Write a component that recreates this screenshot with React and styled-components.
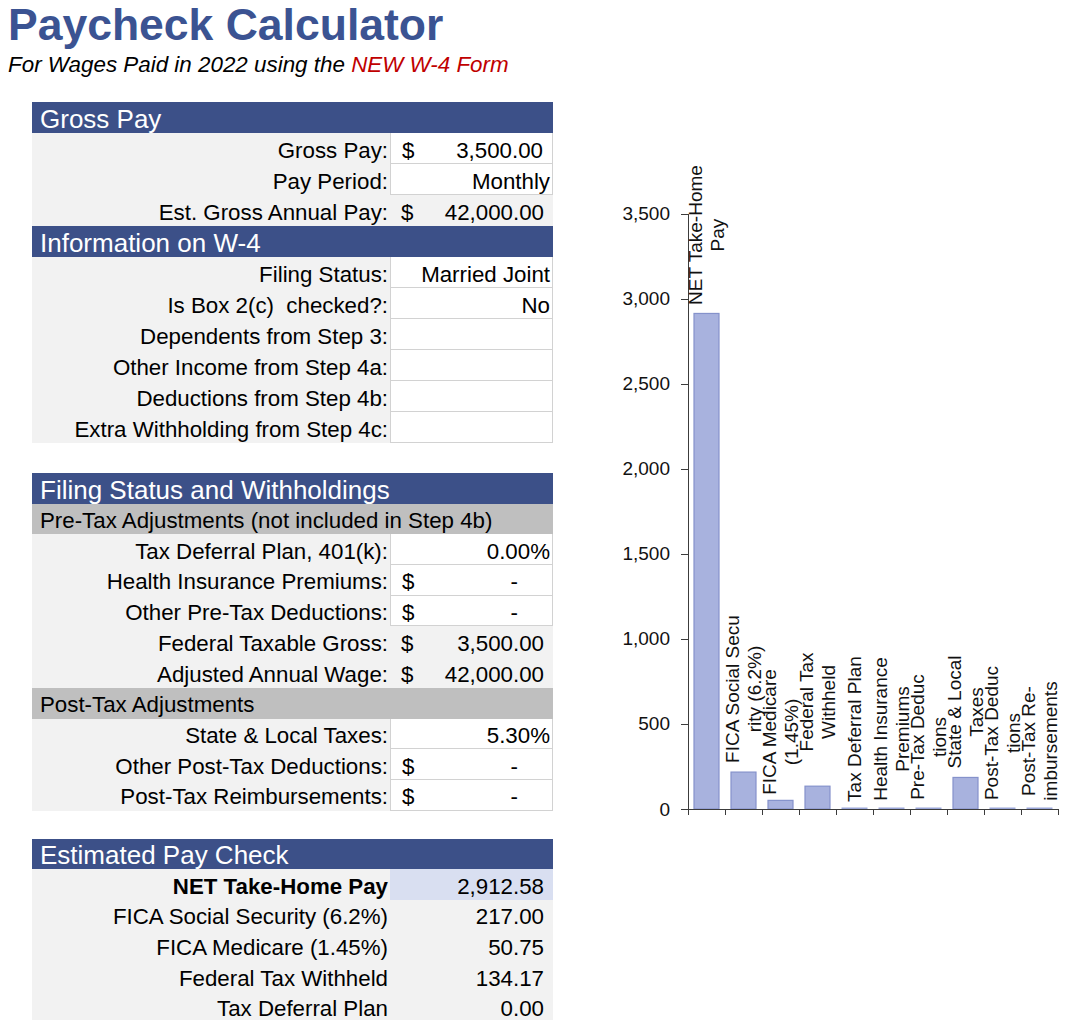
import React from "react";
import styled, { createGlobalStyle } from "styled-components";

const GlobalStyle = createGlobalStyle`
  html, body { margin: 0; padding: 0; background: #ffffff; }
  body { font-family: "Liberation Sans", Arial, sans-serif; color: #000; }
`;

const Page = styled.div`
  width: 1067px;
  height: 1020px;
  overflow: hidden;
  padding-left: 8px;
  box-sizing: border-box;
`;

const Title = styled.h1`
  margin: 0;
  padding-top: 3px;
  font-size: 44.5px;
  line-height: 44.5px;
  font-weight: 700;
  color: #3b5392;
  white-space: nowrap;
`;

const Subtitle = styled.p`
  margin: 4px 0 0;
  font-size: 22.4px;
  line-height: 26px;
  font-style: italic;
  white-space: nowrap;
`;

const Accent = styled.span`
  color: #c00000;
`;

const Content = styled.div`
  display: flex;
  align-items: flex-start;
  margin-top: 24.5px;
`;

const Sheet = styled.div`
  margin-left: 24px;
  width: 521px;
  display: flex;
  flex-direction: column;
`;

const Section = styled.section`
  --row: ${(p) => p.$row}px;
  display: flex;
  flex-direction: column;
`;

const Spacer = styled.div`
  height: ${(p) => p.$h}px;
`;

const BandHeader = styled.div`
  height: var(--row);
  box-sizing: border-box;
  background: #3c5088;
  color: #ffffff;
  font-size: 26px;
  line-height: 1;
  padding: 0 0 1px 8px;
  display: flex;
  align-items: flex-end;
  white-space: nowrap;
`;

const SubHeader = styled.div`
  height: var(--row);
  box-sizing: border-box;
  background: #bfbfbf;
  font-size: 22.3px;
  line-height: 1;
  padding: 0 0 2px 8px;
  display: flex;
  align-items: flex-end;
  white-space: nowrap;
`;

const Row = styled.div`
  display: grid;
  grid-template-columns: 358px 163px;
  height: var(--row);
`;

const Label = styled.div`
  background: #f2f2f2;
  font-size: 22.3px;
  line-height: 1;
  font-weight: ${(p) => (p.$bold ? 700 : 400)};
  display: flex;
  justify-content: flex-end;
  align-items: flex-end;
  padding: 0 2px 2px 0;
  white-space: pre;
`;

const cellBackground = {
  input: "#ffffff",
  plain: "#f2f2f2",
  net: "#d9dff1",
};

const Value = styled.div`
  box-sizing: border-box;
  background: ${(p) => cellBackground[p.$kind]};
  border: ${(p) => (p.$kind === "input" ? "1px solid #d2d2d2" : "none")};
  border-top: none;
  font-size: 22.3px;
  line-height: 1;
  display: flex;
  align-items: flex-end;
  justify-content: ${(p) => (p.$currency ? "space-between" : "flex-end")};
  padding: 0 ${(p) => p.$padRight}px ${(p) => (p.$kind === "input" ? 1 : 2)}px 11px;
  white-space: nowrap;
`;

const Amount = styled.span`
  text-align: right;
`;

const ChartPane = styled.div`
  margin: 47px 0 0 47px;
  width: 467px;
  height: 680px;
`;

const ChartText = styled.text`
  font-family: "Liberation Sans", Arial, sans-serif;
  font-size: 19px;
  fill: #111111;
`;

// Right padding of a value cell depends on its number format
const padFor = (fmt) => {
  if (fmt === "text" || fmt === "pct") return 2;
  if (fmt === "zero") return 34;
  return 9;
};

const sections = [
  {
    row: 31,
    spaceAfter: 30,
    blocks: [
      { type: "band", text: "Gross Pay" },
      { label: "Gross Pay:", kind: "input", currency: true, value: "3,500.00" },
      { label: "Pay Period:", kind: "input", fmt: "text", value: "Monthly" },
      { label: "Est. Gross Annual Pay:", kind: "plain", currency: true, value: "42,000.00" },
      { type: "band", text: "Information on W-4" },
      { label: "Filing Status:", kind: "input", fmt: "text", value: "Married Joint" },
      { label: "Is Box 2(c)  checked?:", kind: "input", fmt: "text", value: "No" },
      { label: "Dependents from Step 3:", kind: "input", value: "" },
      { label: "Other Income from Step 4a:", kind: "input", value: "" },
      { label: "Deductions from Step 4b:", kind: "input", value: "" },
      { label: "Extra Withholding from Step 4c:", kind: "input", value: "" },
    ],
  },
  {
    row: 30.7,
    spaceAfter: 28,
    blocks: [
      { type: "band", text: "Filing Status and Withholdings" },
      { type: "sub", text: "Pre-Tax Adjustments (not included in Step 4b)" },
      { label: "Tax Deferral Plan, 401(k):", kind: "input", fmt: "pct", value: "0.00%" },
      { label: "Health Insurance Premiums:", kind: "input", currency: true, fmt: "zero", value: "-" },
      { label: "Other Pre-Tax Deductions:", kind: "input", currency: true, fmt: "zero", value: "-" },
      { label: "Federal Taxable Gross:", kind: "plain", currency: true, value: "3,500.00" },
      { label: "Adjusted Annual Wage:", kind: "plain", currency: true, value: "42,000.00" },
      { type: "sub", text: "Post-Tax Adjustments" },
      { label: "State & Local Taxes:", kind: "input", fmt: "pct", value: "5.30%" },
      { label: "Other Post-Tax Deductions:", kind: "input", currency: true, fmt: "zero", value: "-" },
      { label: "Post-Tax Reimbursements:", kind: "input", currency: true, fmt: "zero", value: "-" },
    ],
  },
  {
    row: 30.7,
    spaceAfter: 0,
    blocks: [
      { type: "band", text: "Estimated Pay Check" },
      { label: "NET Take-Home Pay", bold: true, kind: "net", value: "2,912.58" },
      { label: "FICA Social Security (6.2%)", kind: "plain", value: "217.00" },
      { label: "FICA Medicare (1.45%)", kind: "plain", value: "50.75" },
      { label: "Federal Tax Withheld", kind: "plain", value: "134.17" },
      { label: "Tax Deferral Plan", kind: "plain", value: "0.00" },
    ],
  },
];

function SheetBlock({ block }) {
  if (block.type === "band") return <BandHeader>{block.text}</BandHeader>;
  if (block.type === "sub") return <SubHeader>{block.text}</SubHeader>;
  return (
    <Row>
      <Label $bold={block.bold}>{block.label}</Label>
      <Value
        $kind={block.kind}
        $currency={block.currency}
        $padRight={padFor(block.fmt)}
      >
        {block.currency && <span>$</span>}
        <Amount>{block.value}</Amount>
      </Value>
    </Row>
  );
}

// Chart geometry (svg units = px)
const AXIS_X = 88;
const BASE_Y = 660;
const PER_UNIT = 595.5 / 3500;
const CAT_W = 37;
const BAR_W = 26;
const LINE_GAP = 22;

const payItems = [
  { value: 2912.58, lines: ["NET Take-Home", "Pay"], mid: 86 },
  { value: 217.0, lines: ["FICA Social Secu", "rity (6.2%)"], mid: 540 },
  { value: 50.75, lines: ["FICA Medicare", "(1.45%)"], mid: 583 },
  { value: 134.17, lines: ["Federal Tax", "Withheld"], mid: 553 },
  { value: 0, lines: ["Tax Deferral Plan"], mid: 580 },
  { value: 0, lines: ["Health Insurance", "Premiums"], mid: 580 },
  { value: 0, lines: ["Pre-Tax Deduc", "tions"], mid: 588 },
  { value: 185.5, lines: ["State & Local", "Taxes"], mid: 563 },
  { value: 0, lines: ["Post-Tax Deduc", "tions"], mid: 584 },
  { value: 0, lines: ["Post-Tax Re-", "imbursements"], mid: 592 },
];

const ticks = [0, 500, 1000, 1500, 2000, 2500, 3000, 3500];

function PayChart() {
  const topY = BASE_Y - 3500 * PER_UNIT;
  const rightX = AXIS_X + CAT_W * payItems.length;
  return (
    <svg width="467" height="680" viewBox="0 0 467 680">
      {payItems.map((item, i) => {
        const cx = AXIS_X + CAT_W * i + CAT_W / 2;
        const h = item.value * PER_UNIT;
        return h > 0 ? (
          <rect
            key={`b${i}`}
            x={cx - BAR_W / 2 + 0.5}
            y={BASE_Y - h}
            width={BAR_W - 1}
            height={h}
            fill="#a8b2de"
            stroke="#8592cb"
            strokeWidth="1.2"
          />
        ) : (
          <rect
            key={`b${i}`}
            x={cx - BAR_W / 2}
            y={BASE_Y - 1.5}
            width={BAR_W}
            height={1.5}
            fill="#9aa6d8"
          />
        );
      })}

      <g stroke="#3c3c3c" strokeWidth="1" shapeRendering="crispEdges">
        <line x1={AXIS_X + 0.5} y1={topY} x2={AXIS_X + 0.5} y2={BASE_Y + 0.5} />
        <line x1={AXIS_X} y1={BASE_Y + 0.5} x2={rightX + 1} y2={BASE_Y + 0.5} />
        {ticks.map((t) => {
          const y = Math.round(BASE_Y - t * PER_UNIT) + 0.5;
          return <line key={`t${t}`} x1={AXIS_X - 7} y1={y} x2={AXIS_X} y2={y} />;
        })}
        {payItems.map((_, i) => {
          const x = Math.round(AXIS_X + CAT_W * i) + 0.5;
          return <line key={`c${i}`} x1={x} y1={BASE_Y} x2={x} y2={BASE_Y + 6} />;
        })}
        <line x1={rightX + 0.5} y1={BASE_Y} x2={rightX + 0.5} y2={BASE_Y + 6} />
      </g>

      {ticks.map((t) => (
        <ChartText
          key={`l${t}`}
          x={70}
          y={BASE_Y - t * PER_UNIT}
          textAnchor="end"
          dominantBaseline="central"
        >
          {t.toLocaleString("en-US")}
        </ChartText>
      ))}

      {payItems.map((item, i) => {
        const cx = AXIS_X + CAT_W * i + CAT_W / 2;
        const n = item.lines.length;
        return item.lines.map((line, j) => {
          const lx = cx + (j - (n - 1) / 2) * LINE_GAP;
          return (
            <ChartText
              key={`n${i}-${j}`}
              x={lx}
              y={item.mid}
              textAnchor="middle"
              dominantBaseline="central"
              transform={`rotate(-90 ${lx} ${item.mid})`}
            >
              {line}
            </ChartText>
          );
        });
      })}
    </svg>
  );
}

export default function App() {
  return (
    <Page>
      <GlobalStyle />
      <Title>Paycheck Calculator</Title>
      <Subtitle>
        For Wages Paid in 2022 using the <Accent>NEW W-4 Form</Accent>
      </Subtitle>
      <Content>
        <Sheet>
          {sections.map((section, si) => (
            <React.Fragment key={si}>
              <Section $row={section.row}>
                {section.blocks.map((block, bi) => (
                  <SheetBlock key={bi} block={block} />
                ))}
              </Section>
              {section.spaceAfter > 0 && <Spacer $h={section.spaceAfter} />}
            </React.Fragment>
          ))}
        </Sheet>
        <ChartPane>
          <PayChart />
        </ChartPane>
      </Content>
    </Page>
  );
}
